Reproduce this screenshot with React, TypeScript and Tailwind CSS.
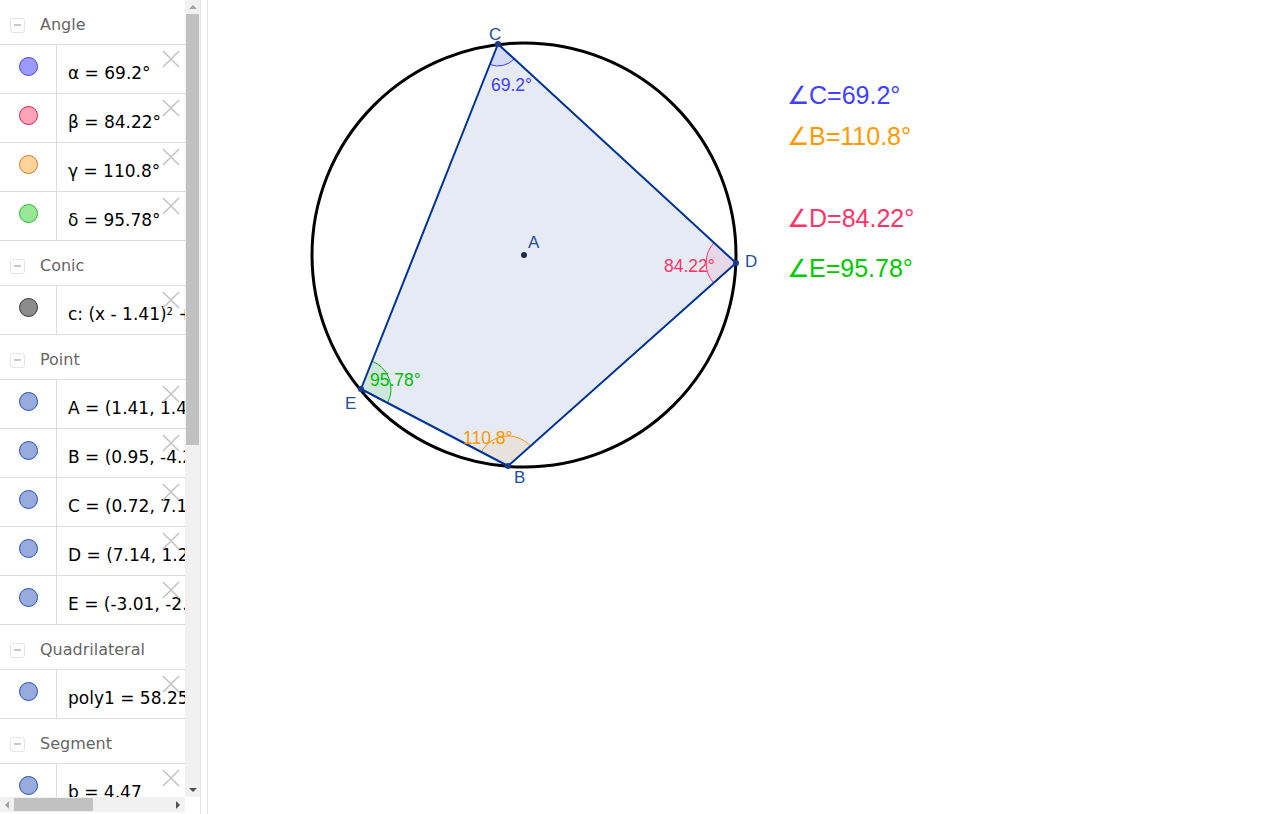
import React from 'react';

type Pt = { x: number; y: number };

type Item = { text: React.ReactNode; fill: string; stroke: string };
type Group = { title: string; items: Item[] };

const pointFill = '#99aadd';
const pointStroke = '#2050c0';

const groups: Group[] = [
  {
    title: 'Angle',
    items: [
      { text: 'α = 69.2°', fill: '#9a9aff', stroke: '#4040ff' },
      { text: 'β = 84.22°', fill: '#ffa3b8', stroke: '#e0204f' },
      { text: 'γ = 110.8°', fill: '#ffd49a', stroke: '#d07820' },
      { text: 'δ = 95.78°', fill: '#99e699', stroke: '#20c020' },
    ],
  },
  {
    title: 'Conic',
    items: [
      {
        text: (
          <>
            c: (x - 1.41)<sup className="text-[10px]">2</sup> + (y - 1.42)<sup className="text-[10px]">2</sup> = 32.37
          </>
        ),
        fill: '#8c8c8c',
        stroke: '#333333',
      },
    ],
  },
  {
    title: 'Point',
    items: [
      { text: 'A = (1.41, 1.42)', fill: pointFill, stroke: pointStroke },
      { text: 'B = (0.95, -4.28)', fill: pointFill, stroke: pointStroke },
      { text: 'C = (0.72, 7.1)', fill: pointFill, stroke: pointStroke },
      { text: 'D = (7.14, 1.2)', fill: pointFill, stroke: pointStroke },
      { text: 'E = (-3.01, -2.2)', fill: pointFill, stroke: pointStroke },
    ],
  },
  {
    title: 'Quadrilateral',
    items: [{ text: 'poly1 = 58.25', fill: pointFill, stroke: pointStroke }],
  },
  {
    title: 'Segment',
    items: [{ text: 'b = 4.47', fill: pointFill, stroke: pointStroke }],
  },
];

function GroupHeader({ title, first }: { title: string; first: boolean }) {
  return (
    <div
      className={`flex shrink-0 items-center gap-[15px] pl-[10px] pt-[6px] ${
        first ? 'h-[44px]' : 'h-[45px] border-t border-[#dddddd]'
      }`}
    >
      <div className="flex h-[15px] w-[15px] items-center justify-center rounded-[3px] border border-[#e4e4e4]">
        <div className="h-[1.5px] w-[7px] bg-[#c8c8c8]" />
      </div>
      <span className="text-[16px] text-[#666666]">{title}</span>
    </div>
  );
}

function ItemRow({ item }: { item: Item }) {
  return (
    <div className="relative flex h-[49px] shrink-0 border-t border-[#dddddd]">
      <div className="flex w-[57px] shrink-0 items-start justify-center border-r border-[#dddddd] pt-[12px]">
        <div
          className="h-[19px] w-[19px] rounded-full border"
          style={{ backgroundColor: item.fill, borderColor: item.stroke }}
        />
      </div>
      <div className="whitespace-nowrap pl-[11px] pt-[18px] text-[17px] leading-[20px] text-black">
        {item.text}
      </div>
      <svg className="absolute left-[162px] top-[5px]" width="18" height="18" viewBox="0 0 18 18">
        <path d="M1 1 L17 17 M17 1 L1 17" stroke="#c4c4c4" strokeWidth="1.6" />
      </svg>
    </div>
  );
}

function AlgebraView() {
  return (
    <div className="flex h-full w-[200px] shrink-0 flex-col bg-white">
      <div className="flex h-[797px] shrink-0">
        <div className="flex w-[185px] shrink-0 flex-col overflow-hidden">
          {groups.map((g, gi) => (
            <React.Fragment key={g.title}>
              <GroupHeader title={g.title} first={gi === 0} />
              {g.items.map((it, i) => (
                <ItemRow key={i} item={it} />
              ))}
            </React.Fragment>
          ))}
        </div>
        {/* vertical scrollbar */}
        <div className="flex w-[15px] shrink-0 flex-col bg-[#f1f1f1]">
          <div className="flex h-[14px] items-center justify-center">
            <div className="h-0 w-0 border-x-[4px] border-b-[4px] border-x-transparent border-b-[#a3a3a3]" />
          </div>
          <div className="mx-[1px] h-[431px] bg-[#c1c1c1]" />
          <div className="flex-1" />
          <div className="flex h-[14px] items-center justify-center">
            <div className="h-0 w-0 border-x-[4px] border-t-[4px] border-x-transparent border-t-[#505050]" />
          </div>
        </div>
      </div>
      {/* horizontal scrollbar */}
      <div className="flex h-[15px] w-[185px] shrink-0 bg-[#f1f1f1]">
        <div className="flex w-[14px] items-center justify-center">
          <div className="h-0 w-0 border-y-[4px] border-r-[4px] border-y-transparent border-r-[#a3a3a3]" />
        </div>
        <div className="my-[1px] w-[79px] bg-[#c1c1c1]" />
        <div className="flex-1" />
        <div className="flex w-[14px] items-center justify-center">
          <div className="h-0 w-0 border-y-[4px] border-l-[4px] border-y-transparent border-l-[#505050]" />
        </div>
      </div>
    </div>
  );
}

const A: Pt = { x: 524, y: 255 };
const B: Pt = { x: 508, y: 466 };
const C: Pt = { x: 498, y: 44 };
const D: Pt = { x: 736, y: 263 };
const E: Pt = { x: 361, y: 389 };

// geometry coordinates are page coordinates; the canvas starts at x=208
const OX = 208;

function sector(p: Pt, q1: Pt, q2: Pt, r: number) {
  const u1 = { x: q1.x - p.x, y: q1.y - p.y };
  const u2 = { x: q2.x - p.x, y: q2.y - p.y };
  const l1 = Math.hypot(u1.x, u1.y);
  const l2 = Math.hypot(u2.x, u2.y);
  const s = { x: p.x + (u1.x / l1) * r, y: p.y + (u1.y / l1) * r };
  const e = { x: p.x + (u2.x / l2) * r, y: p.y + (u2.y / l2) * r };
  const cross = u1.x * u2.y - u1.y * u2.x;
  const sweep = cross > 0 ? 1 : 0;
  return {
    fill: `M${p.x} ${p.y} L${s.x} ${s.y} A${r} ${r} 0 0 ${sweep} ${e.x} ${e.y} Z`,
    arc: `M${s.x} ${s.y} A${r} ${r} 0 0 ${sweep} ${e.x} ${e.y}`,
  };
}

function AngleMark({ p, q1, q2, r, color }: { p: Pt; q1: Pt; q2: Pt; r: number; color: string }) {
  const s = sector(p, q1, q2, r);
  return (
    <g>
      <path d={s.fill} fill={color} fillOpacity={0.1} />
      <path d={s.arc} fill="none" stroke={color} strokeWidth={1} />
    </g>
  );
}

function GraphicsView() {
  const poly = [C, D, B, E].map((p) => `${p.x},${p.y}`).join(' ');
  return (
    <div className="relative h-full flex-1 overflow-hidden bg-white">
      <svg
        className="absolute left-0 top-0"
        width="1072"
        height="814"
        viewBox={`${OX} 0 1072 814`}
        style={{ fontFamily: '"Liberation Sans", Arial, sans-serif' }}
      >
        <polygon points={poly} fill="#e6eaf5" />
        <AngleMark p={C} q1={E} q2={D} r={22} color="#4040ff" />
        <AngleMark p={D} q1={C} q2={B} r={30} color="#ff3366" />
        <AngleMark p={B} q1={D} q2={E} r={30} color="#ff9900" />
        <AngleMark p={E} q1={B} q2={C} r={30} color="#00c000" />
        <circle cx={A.x} cy={A.y} r={212} fill="none" stroke="#000000" strokeWidth={3} />
        <polygon points={poly} fill="none" stroke="#003399" strokeWidth={2} strokeLinejoin="round" />
        {[C, D, B, E].map((p, i) => (
          <circle key={i} cx={p.x} cy={p.y} r={3} fill="#1a3a8a" />
        ))}
        <circle cx={A.x} cy={A.y} r={3} fill="#1a2a4a" />
        <g fill="#1f4fa0" fontSize="17">
          <text x={528} y={248}>A</text>
          <text x={489} y={40}>C</text>
          <text x={745} y={267}>D</text>
          <text x={514} y={483}>B</text>
          <text x={345} y={409}>E</text>
        </g>
        <g fontSize="17.5">
          <text x={491} y={91} fill="#4040ff">69.2°</text>
          <text x={664} y={272} fill="#ff3366">84.22°</text>
          <text x={370} y={386} fill="#00c000">95.78°</text>
          <text x={463} y={444} fill="#ff9900">110.8°</text>
        </g>
      </svg>
      <div className="absolute left-[579px] top-[81px] flex flex-col font-['Liberation_Sans',Arial,sans-serif] text-[25px] leading-[28px]">
        <span className="text-[#4040ff]">∠C=69.2°</span>
        <span className="mt-[13px] text-[#ff9900]">∠B=110.8°</span>
        <span className="mt-[54px] text-[#ff3366]">∠D=84.22°</span>
        <span className="mt-[22px] text-[#00cc00]">∠E=95.78°</span>
      </div>
    </div>
  );
}

export default function App() {
  return (
    <div className="flex h-[814px] w-[1280px] overflow-hidden bg-white font-['DejaVu_Sans','Noto_Sans',sans-serif]">
      <AlgebraView />
      <div className="h-full w-[8px] shrink-0 border-x border-[#e5e5e5] bg-white" />
      <GraphicsView />
    </div>
  );
}
